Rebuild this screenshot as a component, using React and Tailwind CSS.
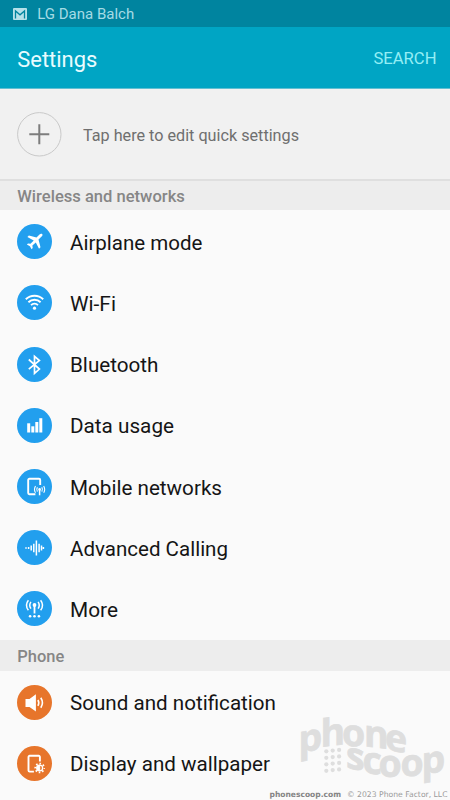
import React from "react";

function AirplaneIcon() {
  return (
    <path
      d="M25.3 10.3c-.8-.8-2-.5-2.8.3l-3 3-7.6-2-1.5 1.5 6.3 3.3-3.2 3.4-2.5-.4-1.1 1.1 3 1.7 1.7 3 1.1-1.1-.3-2.5 3.4-3.2 3.2 6.3 1.5-1.5-2-7.6 3.1-3c.8-.8 1.3-1.7.7-2.3z"
      fill="#fff"
    />
  );
}

function WifiIcon() {
  return (
    <g fill="none" stroke="#fff" strokeWidth="1.9">
      <path d="M8.8 14.2a12.5 12.5 0 0 1 17.4 0" />
      <path d="M11.4 17.2a8.8 8.8 0 0 1 12.2 0" />
      <path d="M14 20.1a5.2 5.2 0 0 1 7 0" />
      <circle cx="17.5" cy="23.2" r="1.6" fill="#fff" stroke="none" />
    </g>
  );
}

function BluetoothIcon() {
  return (
    <path
      d="M11.8 12.5l10.6 9.6-4.9 4.2V9.3l4.9 4.2-10.6 8.6"
      fill="none"
      stroke="#fff"
      strokeWidth="1.7"
    />
  );
}

function DataIcon() {
  return (
    <g fill="#fff">
      <rect x="10.2" y="15.3" width="3" height="9.2" />
      <rect x="14.3" y="18.3" width="3" height="6.2" />
      <rect x="18.3" y="14" width="3" height="10.5" />
      <rect x="22.3" y="10.2" width="3" height="14.3" />
    </g>
  );
}

function MobileIcon() {
  return (
    <g fill="none" stroke="#fff">
      <path d="M23.2 16V11a1.2 1.2 0 0 0-1.2-1.2h-9.6a1.2 1.2 0 0 0-1.2 1.2v13a1.2 1.2 0 0 0 1.2 1.2h6" strokeWidth="1.9" />
      <circle cx="22.6" cy="20.4" r="1.3" fill="#fff" stroke="none" />
      <path d="M22.6 20.5v5.8" strokeWidth="1.5" />
      <path d="M20.4 18.2q-1.4 2.2 0 4.4M18.5 17q-2 3.6 0 6.8M24.8 18.2q1.4 2.2 0 4.4M26.7 17q2 3.6 0 6.8" strokeWidth="1.1" />
    </g>
  );
}

function CallingIcon() {
  return (
    <path
      d="M9 17.2v1.6M11.6 17v2M14.2 15.6v4.8M16.8 13.8v8.4M19.4 10.5v15M22.1 13.8v8.4M24.5 15.4v5.2M26.4 17v2"
      stroke="#fff"
      strokeWidth="1.5"
    />
  );
}

function MoreIcon() {
  return (
    <g fill="none" stroke="#fff" strokeWidth="1.5">
      <circle cx="17.5" cy="14" r="1.9" fill="#fff" stroke="none" />
      <path d="M17.5 14v8.5" strokeWidth="1.8" />
      <path d="M13.9 10.8q-2.3 3.4 0 6.8M11.4 9.2q-3.9 5 0 10M21.1 10.8q2.3 3.4 0 6.8M23.6 9.2q3.9 5 0 10" />
      <g fill="#fff" stroke="none">
        <circle cx="13.1" cy="25.3" r="1.3" />
        <circle cx="17.5" cy="25.3" r="1.3" />
        <circle cx="21.9" cy="25.3" r="1.3" />
      </g>
    </g>
  );
}

function SoundIcon() {
  return (
    <g fill="none" stroke="#fff" strokeWidth="1.6">
      <path d="M8.5 14h4l6.4-4.8v17.2L12.5 22h-4z" fill="#fff" stroke="none" />
      <path d="M20.9 15q1.8 2.9 0 5.8M23.8 12.8q3.2 5 0 10" />
    </g>
  );
}

function DisplayIcon() {
  return (
    <g fill="none" stroke="#fff">
      <path d="M22.9 15.5V11a1.2 1.2 0 0 0-1.2-1.2h-9a1.2 1.2 0 0 0-1.2 1.2v13.4a1.2 1.2 0 0 0 1.2 1.2h4.2" strokeWidth="1.9" />
      <circle cx="22.7" cy="22" r="2.9" strokeWidth="1.3" />
      <path d="M22.7 19.1a2.9 2.9 0 0 0 0 5.8z" fill="#fff" />
      <circle cx="22.7" cy="22" r="4.5" strokeWidth="1.7" strokeDasharray="1.6 1.934" strokeDashoffset="0.8" />
    </g>
  );
}

function Row({ label, color, width, children }) {
  return (
    <div className="flex h-[61.2px] shrink-0 items-center pl-[17px]">
      <svg viewBox="0 0 35 35" className="h-[35px] w-[35px] shrink-0">
        <circle cx="17.5" cy="17.5" r="17.5" fill={color} />
        {children}
      </svg>
      <svg className="ml-[18px] h-[30px] w-[300px] overflow-visible">
        <text x="0" y="23" textLength={width} lengthAdjust="spacingAndGlyphs" fontSize="21" fill="#151515">{label}</text>
      </svg>
    </div>
  );
}

function Section({ label, width }) {
  return (
    <div className="flex h-[30px] shrink-0 items-center bg-[#ededed] pl-[17px]">
      <svg className="h-[24px] w-[200px]">
        <text x="0.3" y="17.7" textLength={width} lengthAdjust="spacingAndGlyphs" fontSize="16.5" fontWeight="500" fill="#868686">{label}</text>
      </svg>
    </div>
  );
}

const LOGO = [
  ["p", 298.5, 753, -10],
  ["h", 320.5, 747, -7],
  ["o", 342, 745.5, 3],
  ["n", 364, 746, 7],
  ["e", 385, 749.5, 10],
  ["s", 346, 767.5, 12],
  ["c", 362.5, 772.5, 7],
  ["o", 378.5, 776.5, 1],
  ["o", 400.5, 776.5, -3],
  ["p", 421.5, 774.5, -8],
];

const DOTS = [0, 1, 2, 3].flatMap((r) => [0, 1, 2].map((c) => [326.3 + c * 6.4, 751.3 + r * 6.5 - c * 0.7]));

function Watermark() {
  return (
    <svg viewBox="290 710 160 90" className="absolute right-0 bottom-0 h-[90px] w-[160px] overflow-visible">
      <g fill="#dedede" stroke="#dedede" strokeWidth="0.7" fontSize="37.5" fontWeight="700" fontFamily="'Open Sans', sans-serif">
        {LOGO.map(([ch, x, y, a], i) => (
          <text key={i} transform={`translate(${x} ${y}) skewY(${a})`}>{ch}</text>
        ))}
      </g>
      <g fill="#dedede">
        {DOTS.map(([x, y], i) => (
          <circle key={i} cx={x} cy={y} r="2.1" />
        ))}
      </g>
      <g fontFamily="'DejaVu Sans', sans-serif" fontSize="7.8">
        <text x="269.5" y="797" textLength="71.5" lengthAdjust="spacingAndGlyphs" fontWeight="700" fill="#858585">phonescoop.com</text>
        <text x="347" y="797" textLength="100.5" lengthAdjust="spacingAndGlyphs" fill="#9a9a9a">© 2023 Phone Factor, LLC</text>
      </g>
    </svg>
  );
}

export default function App() {
  return (
    <div className="relative flex h-[800px] w-[450px] flex-col overflow-hidden bg-[#fafafa] font-[Roboto,sans-serif]">
      <div className="flex h-[27px] shrink-0 items-center bg-[#00849f] pl-[13px]">
        <svg viewBox="0 0 14 12" className="h-[12px] w-[14px]">
          <rect width="14" height="12" rx="1" fill="#b5e1ea" />
          <path d="M2.5 10.5V3L7 6.8 11.5 3v7.5" fill="none" stroke="#00849f" strokeWidth="1.3" />
        </svg>
        <svg className="ml-[10px] h-[20px] w-[110px]">
          <text x="0.2" y="15" fontSize="15.5" textLength="97" lengthAdjust="spacingAndGlyphs" fill="#a5dbe5">LG Dana Balch</text>
        </svg>
      </div>
      <div className="flex h-[62px] shrink-0 items-center justify-between border-b border-[#62bfd2] bg-[#00a5c4] pr-[12px] pl-[17px]">
        <svg className="h-[32px] w-[100px]">
          <text x="0.3" y="24.6" fontSize="22.3" textLength="80" lengthAdjust="spacingAndGlyphs" fill="#e8fcff">Settings</text>
        </svg>
        <svg className="h-[32px] w-[66px] overflow-visible">
          <text x="1.5" y="22.4" fontSize="17.3" textLength="63" lengthAdjust="spacingAndGlyphs" fill="#94eef5">SEARCH</text>
        </svg>
      </div>
      <div className="flex h-[90px] shrink-0 items-center bg-[#f1f1f1] pl-[17px]">
        <svg viewBox="0 0 45 45" className="h-[45px] w-[45px]">
          <circle cx="22.3" cy="22.3" r="21.7" fill="none" stroke="#c9c9c9" />
          <path d="M12.3 22.3h20M22.3 12.3v20" stroke="#7d7d7d" strokeWidth="2" />
        </svg>
        <svg className="ml-[21px] h-[24px] w-[230px]">
          <text x="0" y="18.7" fontSize="16.6" textLength="216" lengthAdjust="spacingAndGlyphs" fill="#6f6f6f">Tap here to edit quick settings</text>
        </svg>
      </div>
      <div className="flex shrink-0 flex-col border-t-2 border-[#dfdfdf]">
        <div className="-mt-px flex flex-col border-t border-[#dfdfdf]">
          <div className="-mb-px flex flex-col">
            <Section label="Wireless and networks" width="167.5" />
          </div>
        </div>
      </div>
      <div className="flex h-[430px] shrink-0 flex-col bg-[#fafafa] pt-[1.2px]">
        <Row label="Airplane mode" width="132.5" color="#229fee"><AirplaneIcon /></Row>
        <Row label="Wi-Fi" width="46" color="#229fee"><WifiIcon /></Row>
        <Row label="Bluetooth" width="88.5" color="#229fee"><BluetoothIcon /></Row>
        <Row label="Data usage" width="104" color="#229fee"><DataIcon /></Row>
        <Row label="Mobile networks" width="152" color="#229fee"><MobileIcon /></Row>
        <Row label="Advanced Calling" width="158" color="#229fee"><CallingIcon /></Row>
        <Row label="More" width="48" color="#229fee"><MoreIcon /></Row>
      </div>
      <div className="flex shrink-0 flex-col border-t border-[#ededed]">
        <Section label="Phone" width="47" />
      </div>
      <div className="flex shrink-0 flex-col pt-[0.5px]">
        <Row label="Sound and notification" width="206" color="#e7752b"><SoundIcon /></Row>
        <Row label="Display and wallpaper" width="200" color="#e7752b"><DisplayIcon /></Row>
      </div>
      <Watermark />
    </div>
  );
}
